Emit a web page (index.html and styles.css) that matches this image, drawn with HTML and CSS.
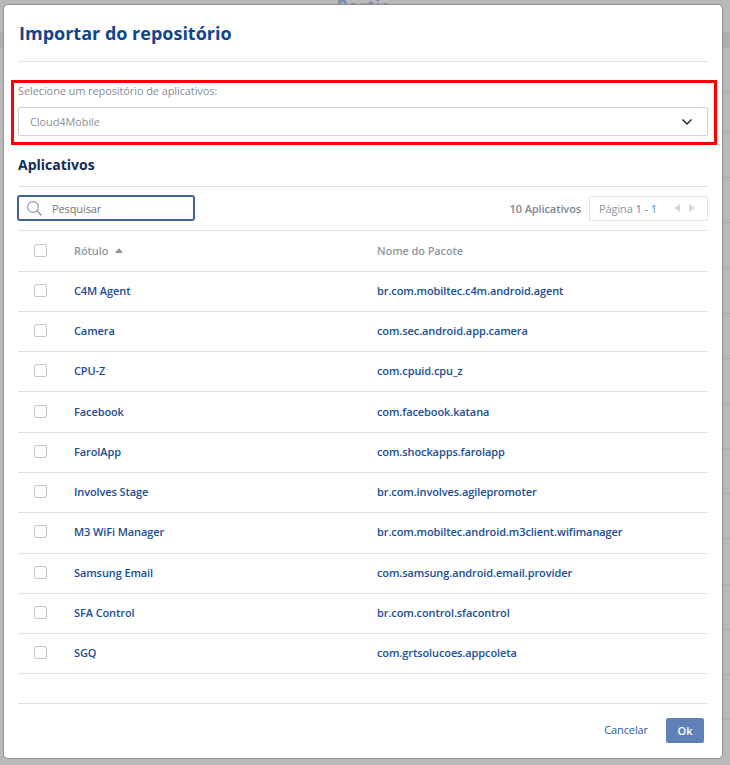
FILE: index.html
```html
<!DOCTYPE html>
<html lang="pt-BR">
<head>
  <meta charset="UTF-8" />
  <title>Importar do repositório</title>
  <link rel="stylesheet" href="styles.css">
</head>
<body>
  <!-- fundo da página, atrás do modal -->
  <div class="backdrop">
    <div class="page-title">Portis</div>
    <div class="page-head"></div>
    <div class="page-row first"></div>
    <div class="page-row short"></div>
    <div class="page-row"></div>
    <div class="page-row"></div>
    <div class="page-row"></div>
    <div class="page-row"></div>
    <div class="page-row"></div>
    <div class="page-row"></div>
    <div class="page-row"></div>
    <div class="page-row"></div>
    <div class="page-row"></div>
    <div class="page-row"></div>
    <div class="page-row"></div>
    <div class="page-row"></div>
    <div class="page-row"></div>
  </div>

  <div class="modal">
    <h1 class="modal-title">Importar do repositório</h1>

    <div class="repo-box">
      <label class="repo-label">Selecione um repositório de aplicativos:</label>
      <div class="repo-select">
        <span>Cloud4Mobile</span>
        <svg class="chevron" width="12" height="8" viewBox="0 0 12 8">
          <path d="M1.5 1.5 6 6l4.5-4.5" fill="none" stroke="#27303d" stroke-width="1.5"/>
        </svg>
      </div>
    </div>

    <h2 class="section-title">Aplicativos</h2>

    <div class="toolbar">
      <div class="search">
        <svg class="search-icon" width="15" height="15" viewBox="0 0 15 15">
          <circle cx="6" cy="6" r="5.4" fill="none" stroke="#8d99a8" stroke-width="1.1"/>
          <path d="M9.8 9.8l4.6 4.6" fill="none" stroke="#8d99a8" stroke-width="1.5"/>
        </svg>
        <span class="search-text">Pesquisar</span>
      </div>
      <div class="pager">
        <span class="count">10 Aplicativos</span>
        <div class="pages">
          <span class="page-label">Página <b>1 - 1</b></span>
          <span class="arrows">
            <svg width="6" height="8" viewBox="0 0 6 8"><path d="M6 0v8L0 4z" fill="#d5d9df"/></svg>
            <svg width="6" height="8" viewBox="0 0 6 8"><path d="M0 0v8l6-4z" fill="#d5d9df"/></svg>
          </span>
        </div>
      </div>
    </div>

    <table class="apps">
      <thead>
        <tr>
          <th class="col-check"><span class="check"></span></th>
          <th class="col-label">Rótulo <span class="sort"></span></th>
          <th>Nome do Pacote</th>
        </tr>
      </thead>
      <tbody>
        <tr><td><span class="check"></span></td><td>C4M Agent</td><td>br.com.mobiltec.c4m.android.agent</td></tr>
        <tr><td><span class="check"></span></td><td>Camera</td><td>com.sec.android.app.camera</td></tr>
        <tr><td><span class="check"></span></td><td>CPU-Z</td><td>com.cpuid.cpu_z</td></tr>
        <tr><td><span class="check"></span></td><td>Facebook</td><td>com.facebook.katana</td></tr>
        <tr><td><span class="check"></span></td><td>FarolApp</td><td>com.shockapps.farolapp</td></tr>
        <tr><td><span class="check"></span></td><td>Involves Stage</td><td>br.com.involves.agilepromoter</td></tr>
        <tr><td><span class="check"></span></td><td>M3 WiFi Manager</td><td>br.com.mobiltec.android.m3client.wifimanager</td></tr>
        <tr><td><span class="check"></span></td><td>Samsung Email</td><td>com.samsung.android.email.provider</td></tr>
        <tr><td><span class="check"></span></td><td>SFA Control</td><td>br.com.control.sfacontrol</td></tr>
        <tr><td><span class="check"></span></td><td>SGQ</td><td>com.grtsolucoes.appcoleta</td></tr>
      </tbody>
    </table>

    <div class="modal-footer">
      <a href="#" class="cancel">Cancelar</a>
      <button type="button" class="ok">Ok</button>
    </div>
  </div>
</body>
</html>
```

FILE: styles.css
```css
* {
  box-sizing: border-box;
}
html, body {
  height: 100%;
}
body {
  margin: 0;
  overflow: hidden;
  background-color: #b9b9b9;
  font-family: "Open Sans", "Liberation Sans", sans-serif;
  font-size: 11px;
  letter-spacing: -0.1px;
}

.backdrop {
  height: 765px;
  overflow: hidden;
}
.page-title {
  height: 28px;
  margin-top: -8px;
  margin-bottom: 12px;
  padding-right: 4px;
  text-align: center;
  font-size: 18px;
  font-weight: 700;
  line-height: 28px;
  letter-spacing: 0;
  color: #7d8ea9;
}
.page-head {
  height: 16px;
  background-color: #b0b0b0;
  border-top: 1px solid #adadad;
  border-bottom: 1px solid #adadad;
}
.page-row {
  height: 45.15px;
  border-bottom: 1px solid #aeaeae;
}
.page-row.short {
  height: 40px;
}

.modal {
  position: absolute;
  top: 4px;
  left: 3px;
  width: 720px;
  height: 755px;
  padding: 0 14px;
  background-color: #fff;
  border: 1px solid #8f8f8f;
  border-radius: 5px;
  display: flex;
  flex-direction: column;
}
.modal-title {
  height: 57px;
  margin: 0;
  padding: 15px 0 0 1px;
  border-bottom: 1px solid #e1e3e6;
  font-size: 18px;
  line-height: 26px;
  font-weight: 700;
  letter-spacing: 0;
  color: #11468f;
}

.repo-box {
  height: 65px;
  margin: 18px -9px 0 -7px;
  padding: 0 6px 0 4px;
  border: 3px solid #ff0000;
}
.repo-label {
  display: block;
  height: 24px;
  line-height: 16px;
  color: #868e99;
}
.repo-select {
  height: 29px;
  padding: 0 14px 0 11px;
  border: 1px solid #cfd3d8;
  border-radius: 2px;
  display: flex;
  align-items: center;
  justify-content: space-between;
  color: #8b929c;
}

.section-title {
  height: 42px;
  margin: 0;
  padding-top: 10px;
  border-bottom: 1px solid #dfe1e5;
  font-size: 14px;
  line-height: 20px;
  font-weight: 700;
  letter-spacing: 0;
  color: #102c56;
}

.toolbar {
  height: 44px;
  padding-bottom: 1px;
  display: flex;
  align-items: center;
  justify-content: space-between;
  border-bottom: 1px solid #dfe1e5;
}
.search {
  width: 178px;
  height: 26px;
  margin-left: -1px;
  padding-left: 8px;
  border: 2px solid #3e6597;
  border-radius: 3px;
  display: flex;
  align-items: center;
  gap: 10px;
}
.search-text {
  color: #7c7468;
}
.pager {
  display: flex;
  align-items: center;
  gap: 8px;
}
.count {
  font-weight: 600;
  color: #7f8794;
}
.pages {
  width: 119px;
  height: 25px;
  padding: 0 12px 0 9px;
  border: 1px solid #dfe2e7;
  border-radius: 2px;
  display: flex;
  align-items: center;
  justify-content: space-between;
  color: #8d94a0;
}
.page-label b {
  font-weight: 400;
  color: #5b82b5;
}
.arrows {
  display: flex;
  gap: 9px;
}

.apps {
  width: 100%;
  border-collapse: collapse;
  table-layout: fixed;
}
.apps th, .apps td {
  padding: 0 0 2px;
  text-align: left;
  vertical-align: middle;
  border-bottom: 1px solid #e1e3e7;
}
.apps th {
  height: 40px;
  padding: 0;
  font-weight: 600;
  color: #8f96a1;
}
.apps td {
  height: 40.3px;
  color: #1a4d94;
  font-weight: 600;
}
.col-check {
  width: 56px;
}
.col-label {
  width: 303px;
}
.check {
  display: block;
  width: 13px;
  height: 13px;
  margin-left: 16px;
  border: 1px solid #c4c7cb;
  border-radius: 2px;
}
.sort {
  display: inline-block;
  width: 0;
  height: 0;
  margin: 0 0 2px 4px;
  border-left: 4.5px solid transparent;
  border-right: 4.5px solid transparent;
  border-bottom: 5px solid #8f96a1;
}

.modal-footer {
  margin-top: 29px;
  height: 54px;
  padding: 14px 4px 0 0;
  border-top: 1px solid #e1e3e6;
  display: flex;
  justify-content: flex-end;
  align-items: flex-start;
  gap: 18px;
}
.cancel {
  line-height: 24px;
  color: #2a5a9c;
  text-decoration: none;
}
.ok {
  width: 38px;
  height: 25px;
  padding: 0;
  border: none;
  border-radius: 2px;
  background-color: #5f82b6;
  color: #fff;
  font-family: inherit;
  font-size: 11px;
  font-weight: 600;
}
```
